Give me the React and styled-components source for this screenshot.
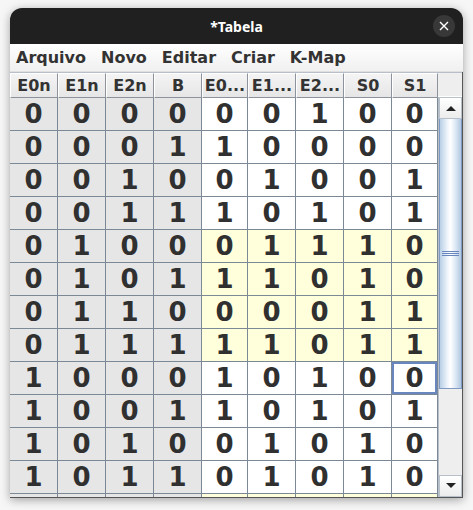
import styled, { createGlobalStyle } from "styled-components";

const Global = createGlobalStyle`
  html, body { margin: 0; padding: 0; background: #f6f6f6; }
  body { width: 473px; height: 510px; overflow: hidden; font-family: "DejaVu Sans", sans-serif; }
`;

const headers = ["E0n", "E1n", "E2n", "B", "E0...", "E1...", "E2...", "S0", "S1"];
const widths = [48, 48, 48, 48, 46, 48, 48, 48, 46];
const cols = widths.map((w) => `${w}px`).join(" ");

// the last row is only a sliver at the bottom edge, its digits are out of view
const rows = [
  "000000100",
  "000110000",
  "001001001",
  "001110101",
  "010001110",
  "010111010",
  "011000011",
  "011111011",
  "100010100",
  "100110101",
  "101001010",
  "101101010",
  "         ",
];
const yellowRows = [4, 5, 6, 7, 12];

export default function App() {
  return (
    <Page>
      <Global />
      <Window>
        <TitleBar>
          <Title>*Tabela</Title>
          <Close>
            <svg width="10" height="10" viewBox="0 0 10 10">
              <path d="M1 1L9 9M9 1L1 9" stroke="#fff" strokeWidth="1.4" />
            </svg>
          </Close>
        </TitleBar>
        <MenuBar>
          <MenuItem>Arquivo</MenuItem>
          <MenuItem>Novo</MenuItem>
          <MenuItem>Editar</MenuItem>
          <MenuItem>Criar</MenuItem>
          <MenuItem>K-Map</MenuItem>
        </MenuBar>
        <Content>
          <TablePane>
            <HeaderRow>
              {headers.map((h) => (
                <HeaderCell key={h}>{h}</HeaderCell>
              ))}
            </HeaderRow>
            <Viewport>
              <Grid>
                {rows.map((r, ri) =>
                  r.split("").map((v, ci) => (
                    <Cell
                      key={`${ri}-${ci}`}
                      $input={ci < 4}
                      $yellow={ci >= 4 && yellowRows.includes(ri)}
                      $selected={ri === 8 && ci === 8}
                    >
                      {v.trim()}
                    </Cell>
                  ))
                )}
              </Grid>
            </Viewport>
          </TablePane>
          <ScrollColumn>
            <Corner />
            <ScrollBar>
              <ArrowButton>
                <svg width="10" height="6" viewBox="0 0 10 6">
                  <path d="M0 6L5 1L10 6Z" fill="#222" />
                </svg>
              </ArrowButton>
              <Track>
                <Thumb>
                  <Grip>
                    <span />
                    <span />
                    <span />
                  </Grip>
                </Thumb>
              </Track>
              <ArrowButton>
                <svg width="10" height="6" viewBox="0 0 10 6">
                  <path d="M0 0L5 5L10 0Z" fill="#222" />
                </svg>
              </ArrowButton>
            </ScrollBar>
          </ScrollColumn>
        </Content>
      </Window>
    </Page>
  );
}

const Page = styled.div`
  padding: 8px 0 0 10px;
`;

const Window = styled.div`
  width: 453px;
  height: 490px;
  display: flex;
  flex-direction: column;
  border-radius: 12px 12px 0 0;
  background: #eeeeee;
  box-shadow: 0 2px 10px rgba(0, 0, 0, 0.35);
  overflow: hidden;
`;

const TitleBar = styled.div`
  height: 36px;
  flex: none;
  background: #202020;
  display: flex;
  align-items: center;
  justify-content: center;
  position: relative;
`;

const Title = styled.div`
  color: #ffffff;
  font-family: "Noto Sans", sans-serif;
  font-weight: 700;
  font-size: 14px;
`;

const Close = styled.div`
  position: absolute;
  right: 8px;
  top: 7px;
  width: 22px;
  height: 22px;
  border-radius: 50%;
  background: #383838;
  display: flex;
  align-items: center;
  justify-content: center;
`;

const MenuBar = styled.div`
  height: 27px;
  flex: none;
  display: flex;
  align-items: center;
  gap: 15px;
  padding-left: 6px;
  background: linear-gradient(#ffffff, #f0f0f0);
  border-bottom: 1px solid #e0e0e0;
`;

const MenuItem = styled.div`
  font-weight: 700;
  font-size: 16px;
  color: #333333;
`;

const Content = styled.div`
  flex: 1;
  display: flex;
  border-left: 1px solid #555;
  border-right: 1px solid #555;
  border-bottom: 1px solid #555;
  min-height: 0;
`;

const TablePane = styled.div`
  width: 427px;
  display: flex;
  flex-direction: column;
`;

const HeaderRow = styled.div`
  display: grid;
  grid-template-columns: ${cols};
  height: 25px;
  flex: none;
  margin-left: -1px;
  border-top: 1px solid #b8bfc8;
`;

const HeaderCell = styled.div`
  display: flex;
  align-items: center;
  justify-content: center;
  background: linear-gradient(#f4f4f4, #e6e6e6);
  border-top: 1px solid #ffffff;
  border-left: 1px solid #ffffff;
  border-right: 1px solid #8c939c;
  border-bottom: 1px solid #8c939c;
  font-weight: 700;
  font-size: 16px;
  color: #333333;
  overflow: hidden;
  white-space: nowrap;
`;

const Viewport = styled.div`
  flex: 1;
  overflow: hidden;
  background: #ffffff;
  margin-left: -1px;
`;

const Grid = styled.div`
  display: grid;
  grid-template-columns: ${cols};
  grid-auto-rows: 33px;
`;

const Cell = styled.div`
  display: flex;
  align-items: center;
  justify-content: center;
  border-right: 1px solid #7b8896;
  border-bottom: 1px solid #7b8896;
  background: ${(p) => (p.$input ? "#e6e6e6" : p.$yellow ? "#ffffdc" : "#ffffff")};
  box-shadow: ${(p) => (p.$selected ? "inset 0 0 0 2px #6a86bf" : "none")};
  font-weight: 700;
  font-size: 26px;
  color: #303030;
`;

const ScrollColumn = styled.div`
  width: 24px;
  display: flex;
  flex-direction: column;
`;

const Corner = styled.div`
  height: 25px;
  flex: none;
  background: #eeeeee;
  border-top: 1px solid #b8bfc8;
  border-bottom: 1px solid #ffffff;
  box-sizing: border-box;
`;

const ScrollBar = styled.div`
  flex: 1;
  display: flex;
  flex-direction: column;
  background: #eeeeee;
  border-left: 1px solid #b8bfc8;
`;

const ArrowButton = styled.div`
  height: 22px;
  flex: none;
  display: flex;
  align-items: center;
  justify-content: center;
  background: linear-gradient(#ffffff, #ececec);
  border: 1px solid #b8c0ca;
  box-sizing: border-box;
`;

const Track = styled.div`
  flex: 1;
  display: flex;
  flex-direction: column;
`;

const Thumb = styled.div`
  height: 270px;
  box-sizing: border-box;
  border: 1px solid #7f9bc4;
  border-top: none;
  background: linear-gradient(90deg, #b9cfe6, #eef4fb 35%, #ffffff 50%, #dbe7f4 75%, #b1c8e1);
  display: flex;
  align-items: center;
  justify-content: center;
`;

const Grip = styled.div`
  display: flex;
  flex-direction: column;
  gap: 1px;
  span {
    display: block;
    width: 17px;
    height: 1px;
    background: #6a86bf;
  }
`;
